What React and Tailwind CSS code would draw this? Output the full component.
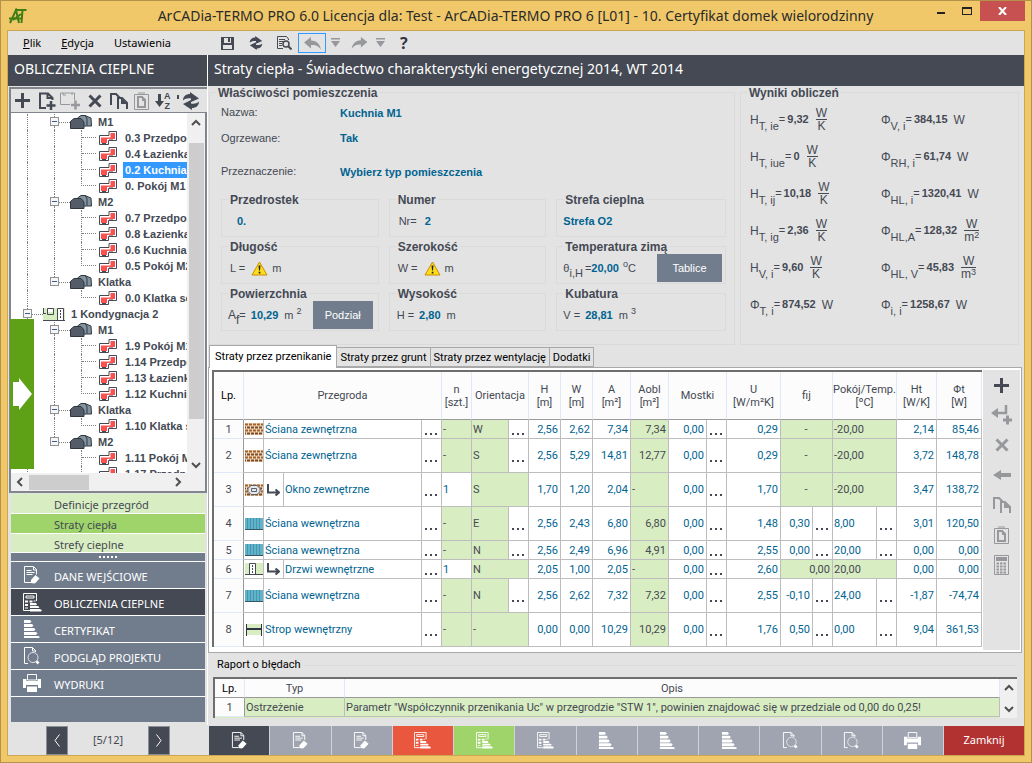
import { useState } from 'react';

const tree = [
  { level: 2, label: 'M1' },
  { level: 3, label: '0.3 Przedpokój M1', line: true },
  { level: 3, label: '0.4 Łazienka M1', line: true },
  { level: 3, label: '0.2 Kuchnia M1', line: true, selected: true },
  { level: 3, label: '0. Pokój M1', line: true, last: true },
  { level: 2, label: 'M2' },
  { level: 3, label: '0.7 Przedpokój M2', line: true },
  { level: 3, label: '0.8 Łazienka M2', line: true },
  { level: 3, label: '0.6 Kuchnia M2', line: true },
  { level: 3, label: '0.5 Pokój M2', line: true, last: true },
  { level: 2, label: 'Klatka', last: true },
  { level: 3, label: '0.0 Klatka schodowa', last: true },
  { level: 1, label: '1 Kondygnacja 2' },
  { level: 2, label: 'M1' },
  { level: 3, label: '1.9 Pokój M1', line: true },
  { level: 3, label: '1.14 Przedpokój M1', line: true },
  { level: 3, label: '1.13 Łazienka M1', line: true },
  { level: 3, label: '1.12 Kuchnia M1', line: true, last: true },
  { level: 2, label: 'Klatka' },
  { level: 3, label: '1.10 Klatka schodowa', line: true, last: true },
  { level: 2, label: 'M2', last: true },
  { level: 3, label: '1.11 Pokój M2' },
  { level: 3, label: '1.17 Przedpokój M2' },
];

const rows = [
  { icon: 'brick', name: 'Ściana zewnętrzna', n: '-', o: 'W', oDots: true, h: '2,56', w: '2,62', a: '7,34', aobl: '7,34', u: '0,29', fij: '-', temp: '-20,00', ht: '2,14', ft: '85,46' },
  { icon: 'brick', tall: true, name: 'Ściana zewnętrzna', n: '-', o: 'S', oDots: true, h: '2,56', w: '5,29', a: '14,81', aobl: '12,77', u: '0,29', fij: '-', temp: '-20,00', ht: '3,72', ft: '148,78' },
  { icon: 'window', tall: true, child: true, name: 'Okno zewnętrzne', n: '1', o: 'S', h: '1,70', w: '1,20', a: '2,04', aobl: '-', u: '1,70', fij: '-', temp: '-20,00', ht: '3,47', ft: '138,72' },
  { icon: 'wall', tall: true, name: 'Ściana wewnętrzna', n: '-', o: 'E', oDots: true, h: '2,56', w: '2,43', a: '6,80', aobl: '6,80', u: '1,48', fij: '0,30', fDots: true, temp: '8,00', ht: '3,01', ft: '120,50' },
  { icon: 'wall', name: 'Ściana wewnętrzna', n: '-', o: 'N', oDots: true, h: '2,56', w: '2,49', a: '6,96', aobl: '4,91', u: '2,55', fij: '0,00', fDots: true, temp: '20,00', ht: '0,00', ft: '0,00' },
  { icon: 'door', child: true, name: 'Drzwi wewnętrzne', n: '1', o: 'N', h: '2,05', w: '1,00', a: '2,05', aobl: '-', u: '2,60', fij: '0,00', temp: '20,00', ht: '0,00', ft: '0,00' },
  { icon: 'wall', tall: true, name: 'Ściana wewnętrzna', n: '-', o: 'N', oDots: true, h: '2,56', w: '2,62', a: '7,32', aobl: '7,32', u: '2,55', fij: '-0,10', fDots: true, temp: '24,00', ht: '-1,87', ft: '-74,74' },
  { icon: 'slab', tall: true, name: 'Strop wewnętrzny', n: '-', o: '-', h: '0,00', w: '0,00', a: '10,29', aobl: '10,29', u: '1,76', fij: '0,50', fDots: true, temp: '0,00', ht: '9,04', ft: '361,53' },
];

const resultsLeft = [
  { s: 'H', sub: 'T, ie', v: '9,32', top: 'W', bottom: 'K' },
  { s: 'H', sub: 'T, iue', v: '0', top: 'W', bottom: 'K' },
  { s: 'H', sub: 'T, ij', v: '10,18', top: 'W', bottom: 'K' },
  { s: 'H', sub: 'T, ig', v: '2,36', top: 'W', bottom: 'K' },
  { s: 'H', sub: 'V, i', v: '9,60', top: 'W', bottom: 'K' },
  { s: 'Φ', sub: 'T, i', v: '874,52' },
];

const resultsRight = [
  { s: 'Φ', sub: 'V, i', v: '384,15' },
  { s: 'Φ', sub: 'RH, i', v: '61,74' },
  { s: 'Φ', sub: 'HL, i', v: '1320,41' },
  { s: 'Φ', sub: 'HL,A', v: '128,32', top: 'W', bottom: 'm', pow: '2' },
  { s: 'Φ', sub: 'HL, V', v: '45,83', top: 'W', bottom: 'm', pow: '3' },
  { s: 'Φ', sub: 'i, i', v: '1258,67' },
];

const nav = [
  { label: 'DANE WEJŚCIOWE', Icon: DocEditIcon },
  { label: 'OBLICZENIA CIEPLNE', Icon: CalcBarsIcon, active: true },
  { label: 'CERTYFIKAT', Icon: BarsIcon },
  { label: 'PODGLĄD PROJEKTU', Icon: DocSearchIcon },
  { label: 'WYDRUKI', Icon: PrinterIcon },
];

const steps = [
  { Icon: DocEditIcon, bg: 'bg-[#444953]' },
  { Icon: DocEditIcon },
  { Icon: DocEditIcon },
  { Icon: CalcBarsIcon, bg: 'bg-[#e9573e]' },
  { Icon: CalcBarsIcon, bg: 'bg-[#9fd46a]' },
  { Icon: CalcBarsIcon },
  { Icon: BarsIcon },
  { Icon: BarsIcon },
  { Icon: BarsIcon },
  { Icon: DocSearchIcon },
  { Icon: DocSearchIcon },
  { Icon: PrinterIcon },
];

const tabs = ['Straty przez przenikanie', 'Straty przez grunt', 'Straty przez wentylację', 'Dodatki'];

/* ---------- icons ---------- */

function DocEditIcon({ size = 18 }) {
  return (
    <svg width={size} height={size} viewBox="0 0 18 18" fill="none" stroke="white">
      <path d="M8 16.5H1.5V.5h9l3 3v5" />
      <path d="M10.5 1v3h3M3.5 4.500h5M3.500 6.500h8M3.500 8.500h6" />
      <path d="M8 17v-3l4.500-5 4 3.500-4 4.500-1.500.5z" fill="white" stroke="none" />
    </svg>
  );
}

function CalcBarsIcon({ size = 19 }) {
  return (
    <svg width={size} height={size} viewBox="0 0 19 19" fill="none" stroke="white">
      <path d="M7 17.500H.5V.5h13V8" />
      <path d="M3 3h8v2H3z" />
      <path d="M2 7.500h3v2H2zM6.500 7.500h3v2h-3zM10.500 7.500h2v1h-2zM2 11h3v2H2zM2 14.500h3v1H2z" fill="white" stroke="none" />
      <path d="M7 10h6l1 1.500-1 .8H7zM7 13h8l1.500 1.200-1 .8H7zM7 16h10l2 1.300-1 1.200H7z" fill="white" stroke="none" />
    </svg>
  );
}

function BarsIcon({ size = 18 }) {
  return (
    <svg width={size} height={size} viewBox="0 0 18 18" fill="white">
      <path d="M1 0h6l1.500 1.500L7 3H1zM1 4h8l1.500 1.500L9 7H1zM1 8h10l1.500 1.500L11 11H1zM1 12h12l1.500 1.200L13 15H1zM1 16h14l2 1-1.500 1.500H1z" />
    </svg>
  );
}

function DocSearchIcon({ size = 18 }) {
  return (
    <svg width={size} height={size} viewBox="0 0 18 18" fill="none" stroke="white">
      <path d="M5 16.500H1.500V.5h8l3 3V5M9.500.5v3.500h3.500" />
      <circle cx="10" cy="10.500" r="5" stroke="#dfe3ea" />
      <path d="M12.500 15l2 2.500 2-2-2-2z" fill="white" stroke="none" />
    </svg>
  );
}

function PrinterIcon({ size = 18 }) {
  return (
    <svg width={size} height={size} viewBox="0 0 18 18" fill="white">
      <path d="M4.500.5h9V6h-9z" fill="none" stroke="white" />
      <path d="M0 5h3.500v2h11V5H18v9h-3v-3H3v3H0z" />
      <path d="M4 12.500h10V18H4z" />
    </svg>
  );
}

function PlusIcon() {
  return <svg width="15" height="15" viewBox="0 0 15 15"><path d="M6 0h3v6h6v3H9v6H6V9H0V6h6z" fill="#444953" /></svg>;
}

function CrossIcon({ color = '#444953', size = 14 }) {
  return (
    <svg width={size} height={size} viewBox="0 0 14 14">
      <path d="M1.500 1.500l11 11M12.500 1.500l-11 11" stroke={color} strokeWidth="3" />
    </svg>
  );
}

function AddPageIcon() {
  return (
    <svg width="18" height="18" viewBox="0 0 18 18" fill="none" stroke="#444953">
      <path d="M8 16H2V1.500h8l4.500 4.500v2M9.500 1.500V6h4" strokeWidth="2" />
      <path d="M13 9v9M8.500 13.500h9" strokeWidth="2.500" />
    </svg>
  );
}

function AddRoomIcon() {
  return (
    <svg width="20" height="18" viewBox="0 0 20 18" fill="none" stroke="#96989c">
      <path d="M10 12.500H.5V1h14v7M3 1v2h3M12 1v2" />
      <path d="M15.500 8.500v9M11 13h9" strokeWidth="2.500" />
    </svg>
  );
}

function CopyIcon({ color = '#444953' }) {
  return (
    <svg width="18" height="16" viewBox="0 0 18 16" fill="none" stroke={color} strokeWidth="2">
      <path d="M1 12V1h5l4 4" />
      <path d="M8 16V5h4l5 5v6" />
      <path d="M11 5v6h6z" fill={color} stroke="none" />
    </svg>
  );
}

function PasteIcon() {
  return (
    <svg width="15" height="18" viewBox="0 0 15 18" fill="none" stroke="#96989c">
      <path d="M.5 2.500h14v15H.5zM4 1h7" />
      <path d="M4 5h4l3 3v7H4z" strokeWidth="2" />
      <path d="M8 4v5h4z" fill="#96989c" stroke="none" />
    </svg>
  );
}

function SortIcon() {
  return (
    <span className="flex items-center text-[9px] font-bold leading-[10px] text-[#444953]">
      <svg width="9" height="14" viewBox="0 0 9 14"><path d="M3 0h3v7h3l-4.500 6L0 7h3z" fill="#444953" /></svg>
      <span className="flex flex-col"><span>A</span><span>Z</span></span>
    </span>
  );
}

function RefreshIcon({ size = 18 }) {
  return (
    <svg width={size} height={size} viewBox="0 0 18 18" fill="#444953">
      <path d="M1 8.500C1 4 4.500 2 8 2V0l9 6.500L9 10V6.500C6 6 3 6.500 1 8.500z" />
      <path d="M17 9.500c0 4.500-3.500 6.500-7 6.500v2l-9-6L9 8v3.500c3 .5 6 0 8-2z" />
    </svg>
  );
}

function BuildingIcon() {
  return (
    <svg width="22" height="14" viewBox="0 0 22 14" stroke="#2f3640" strokeWidth="1">
      <path d="M7.500 3L11 .5h4l6 2.500 .5 8H13z" fill="#84949f" />
      <path d="M.5 6.500L4 3.500h7L14 7v6.500H.5z" fill="#535c68" />
      <path d="M15 .5l2 3v7" fill="none" />
    </svg>
  );
}

function RoomIcon() {
  return (
    <svg width="18" height="14" viewBox="0 0 18 14">
      <path d="M.5 4.500h9.500v-4h7.500v9H9.500v4h-9z" fill="white" stroke="#444953" />
      <path d="M2 6.500h9.500V2H16v6H8v4H2z" fill="#fb5050" />
      <path d="M3 12h4v1.500H3zM10 8.500h4v1h-4z" fill="#444953" />
    </svg>
  );
}

function FloorIcon() {
  return (
    <svg width="22" height="13" viewBox="0 0 22 13">
      <path d="M0 0h22v13H0z" fill="#d9edc2" />
      <path d="M15 1h6v11h-6z" fill="white" />
      <path d="M.5 0v6M0 5.500h3M0 12.500h22M4.500.5h6v6h-6zM14.500 12V.5h6V12" fill="none" stroke="#444953" />
      <path d="M5 1h5v3H5z" fill="white" />
      <path d="M17.500 2v9" stroke="#444953" strokeDasharray="2 1" />
    </svg>
  );
}

function WarningIcon() {
  return (
    <svg width="17" height="15" viewBox="0 0 17 15">
      <path d="M8.500 1L16 14H1z" fill="#ffdc1e" stroke="#c98f00" strokeLinejoin="round" />
      <path d="M7.500 4.500h2l-.5 5H8zM7.700 10.700h1.700v1.700H7.700z" fill="#222" />
    </svg>
  );
}

function PartitionIcon({ type }) {
  if (type === 'wall') {
    return (
      <svg width="18" height="12" viewBox="0 0 18 12">
        <path d="M0 0h18v12H0z" fill="#5fb3cb" />
        <path d="M2.500 0v11M5.500 0v11M8.500 0v11M11.500 0v11M14.500 0v11" stroke="#4796ae" />
        <path d="M0 11.500h18" stroke="#3a5663" />
      </svg>
    );
  }
  if (type === 'door') {
    return (
      <svg width="18" height="12" viewBox="0 0 18 12">
        <path d="M0 0h18v12H0z" fill="#d9edc2" />
        <path d="M4 1h6v10H4z" fill="white" />
        <path d="M0 11.500h18M4.500 11V.5h6V11" fill="none" stroke="#444953" />
        <path d="M7.500 2v9" stroke="#444953" strokeDasharray="2 1" />
      </svg>
    );
  }
  if (type === 'slab') {
    return (
      <svg width="18" height="12" viewBox="0 0 18 12">
        <path d="M1 0h16v11H1z" fill="#d9edc2" />
        <path d="M1.500 0v12M16.500 0v12" stroke="#2f3640" />
        <path d="M2 5h14" stroke="#2f3640" strokeWidth="2" />
      </svg>
    );
  }
  return (
    <svg width="18" height="12" viewBox="0 0 18 12">
      <path d="M0 0h18v12H0z" fill="#eed9bf" />
      <path d="M0 1.500h18M0 7.500h18" stroke="#a5622c" strokeWidth="2" strokeDasharray="3 1" />
      <path d="M0 4.500h18M0 10.500h18" stroke="#7d4a22" strokeWidth="2" strokeDasharray="3 1" strokeDashoffset="2" />
      {type === 'window' && <path d="M6 1.500h6l3 3v3l-3 3H6l-3-3v-3zM6.500 4.500h5v3h-5z" fill="#e5e7eb" stroke="#5b626c" />}
    </svg>
  );
}

function Chevron({ dir }) {
  const d = { up: 'M1 7l4-4 4 4', down: 'M1 3l4 4 4-4', left: 'M7 1L3 5l4 4', right: 'M3 1l4 4-4 4' }[dir];
  return <svg width="10" height="10" viewBox="0 0 10 10" fill="none" stroke="#505050" strokeWidth="2"><path d={d} /></svg>;
}

/* ---------- small parts ---------- */

function Group({ title, className = '', legendClass = 'left-[6px]', children }) {
  return (
    <fieldset className={`relative min-w-0 border border-[#dadada] ${className}`}>
      <legend className={`absolute -top-[6px] whitespace-nowrap bg-[#e3e3e3] px-[2px] text-[12px] leading-[13px] font-bold text-[#444953] ${legendClass}`}>{title}</legend>
      {children}
    </fieldset>
  );
}

function Value({ children }) {
  return <span className="font-bold text-[#006491]">{children}</span>;
}

function Result({ item }) {
  return (
    <div className="flex h-[37px] items-center whitespace-nowrap text-[11px]">
      <span className="text-[12px]">{item.s}</span>
      <sub className="top-[6px] text-[11px]">{item.sub}</sub>
      <span>=</span>
      <b className="ml-[2px]">{item.v}</b>
      {item.top ? (
        <span className="ml-[7px] flex flex-col items-center text-[12px] leading-[12px]">
          <span className="w-full border-b border-[#444953] text-center">{item.top}</span>
          <span className="flex">{item.bottom}{item.pow && <span className="text-[9px] leading-[9px]">{item.pow}</span>}</span>
        </span>
      ) : (
        <span className="ml-[6px] text-[12px]">W</span>
      )}
    </div>
  );
}

function TreeRow({ item }) {
  const dots = 'border-[#808080] border-dotted';
  return (
    <li className="flex h-[16px] items-center whitespace-nowrap">
      {item.level > 1 && (
        <>
          <span className="w-[16px] shrink-0" />
          <span className={`h-full shrink-0 border-l ${dots} ${item.level === 2 ? 'w-[23px]' : 'w-[27px]'}`} />
        </>
      )}
      {item.level === 1 && <span className="w-[12px] shrink-0" />}
      {item.level === 3 ? (
        <>
          <span className={`h-full w-[27px] shrink-0 ${item.line ? `border-l ${dots}` : ''}`} />
          <span className={`flex h-full w-[15px] shrink-0 flex-col ${item.last ? '' : `border-l ${dots}`}`}>
            <span className={`h-[8px] border-b ${dots} ${item.last ? 'border-l' : ''}`} />
          </span>
          <span className="ml-[3px] shrink-0"><RoomIcon /></span>
          <span className={`ml-[6px] h-[16px] px-[2px] leading-[16px] ${item.selected ? 'bg-[#3399ff] text-white' : ''}`}>{item.label}</span>
        </>
      ) : (
        <>
          <span className="flex h-full shrink-0 flex-col items-center">
            <span className={`h-[3px] border-l ${dots}`} />
            <button aria-label="Zwiń" className="flex h-[9px] w-[9px] items-center justify-center border border-[#919191] bg-[#f6f6f6]">
              <span className="h-px w-[5px] bg-[#3c5a9c]" />
            </button>
            {!item.last && <span className={`flex-1 border-l ${dots}`} />}
          </span>
          <span className={`w-[11px] shrink-0 border-t ${dots}`} />
          <span className="shrink-0">{item.level === 1 ? <FloorIcon /> : <BuildingIcon />}</span>
          <span className="ml-[6px]">{item.label}</span>
        </>
      )}
    </li>
  );
}

function Cell({ green, left, center, span, children }) {
  return (
    <td
      colSpan={span}
      className={`overflow-hidden border-r border-b border-[#bdbdbd] py-0 pr-[2px] pl-px whitespace-nowrap ${green ? 'bg-[#d9edc2] text-[#444953]' : 'text-[#006491]'} ${left ? 'text-left' : center ? 'text-center' : 'text-right'}`}
    >
      {children}
    </td>
  );
}

function DotsCell() {
  return (
    <td className="border-r border-b border-[#bdbdbd] p-0 text-center">
      <button aria-label="Wybierz" className="inline-flex gap-[3px] pt-[9px] align-middle">
        <span className="h-[2px] w-[2px] bg-[#444953]" />
        <span className="h-[2px] w-[2px] bg-[#444953]" />
        <span className="h-[2px] w-[2px] bg-[#444953]" />
      </button>
    </td>
  );
}

function Head({ span, className = '', children }) {
  return <th colSpan={span} className={`border-r border-b border-r-[#dfe9f7] border-b-[#9a9a9a] p-0 font-normal ${className}`}>{children}</th>;
}

/* ---------- page areas ---------- */

function TitleBar() {
  return (
    <header className="flex h-[29px] shrink-0 items-start">
      <svg className="mt-[7px] ml-[8px]" width="18" height="16" viewBox="0 0 18 16" fill="none" stroke="#3f7d16" strokeWidth="2">
        <path d="M1 15L7 2l3 13M0 10.500h13" />
        <path d="M6 2h11.500M13.500 2l-1 13M12 6l-8 6" />
      </svg>
      <h1 className="ml-[76px] flex-1 pt-[4px] text-center font-['Noto_Sans',sans-serif] text-[14px] leading-[21px] whitespace-nowrap text-[#2b2b2b]">
        ArCADia-TERMO PRO 6.0 Licencja dla: Test - ArCADia-TERMO PRO 6 [L01] - 10. Certyfikat domek wielorodzinny
      </h1>
      <button aria-label="Minimalizuj" className="flex h-[20px] w-[26px] items-center justify-center pt-[4px]">
        <span className="h-[2px] w-[8px] bg-[#222]" />
      </button>
      <button aria-label="Maksymalizuj" className="flex h-[20px] w-[26px] items-center justify-center">
        <span className="h-[8px] w-[10px] border border-t-2 border-[#222]" />
      </button>
      <button aria-label="Zamknij okno" className="mr-[6px] flex h-[20px] w-[45px] items-center justify-center bg-[#c75050]">
        <svg width="9" height="8" viewBox="0 0 9 8"><path d="M1 0l7 8M8 0L1 8" stroke="white" strokeWidth="2" /></svg>
      </button>
    </header>
  );
}

function MenuBar() {
  return (
    <div className="flex h-[24px] shrink-0 items-center bg-[#e3e3e3] font-['Noto_Sans',sans-serif] text-[11px] text-black">
      <nav className="flex w-[213px] gap-[20px] pl-[15px]">
        <button><u>P</u>lik</button>
        <button><u>E</u>dycja</button>
        <button>Ustawienia</button>
      </nav>
      <button aria-label="Zapisz" className="w-[28px]">
        <svg width="13" height="13" viewBox="0 0 13 13"><path d="M0 0h13v13H0zM3 1v5h7V1zM2 8v4h9V8z" fill="#444953" fillRule="evenodd" /><path d="M7 1h2v4H7z" fill="#444953" /></svg>
      </button>
      <button aria-label="Odśwież" className="w-[28px]"><RefreshIcon size={14} /></button>
      <button aria-label="Podgląd" className="w-[21px]">
        <svg width="15" height="14" viewBox="0 0 15 14" fill="none" stroke="#444953">
          <path d="M11.500 4V3l-2-2.500h-9v12H6M2 3.500h6M2 5.500h5M2 7.500h3M2 9.500h3" />
          <circle cx="9" cy="8" r="3" strokeWidth="1.500" />
          <path d="M11 10l3.500 3.500" strokeWidth="2" />
        </svg>
      </button>
      <button aria-label="Cofnij" className="flex h-[20px] w-[28px] items-center justify-center border border-[#3399ff]">
        <svg width="17" height="13" viewBox="0 0 17 13"><path d="M0 5.500L7 0v3.500c6 0 9 4 10 9C14 8.500 11 8 7 8v3.500z" fill="#96989c" /></svg>
      </button>
      <button aria-label="Lista cofania" className="w-[20px] pl-[5px]">
        <svg width="9" height="10" viewBox="0 0 9 10"><path d="M0 0h9v1.500H0zM0 3h9L4.500 9z" fill="#96989c" /></svg>
      </button>
      <button aria-label="Ponów" className="w-[30px] pl-[5px]">
        <svg width="17" height="12" viewBox="0 0 17 13"><path d="M17 5.500L10 0v3.500c-6 0-9 4-10 9C3 8.500 6 8 10 8v3.500z" fill="#96989c" /></svg>
      </button>
      <button aria-label="Lista ponawiania" className="w-[20px]">
        <svg width="9" height="10" viewBox="0 0 9 10"><path d="M0 0h9v1.500H0zM0 3h9L4.500 9z" fill="#96989c" /></svg>
      </button>
      <button className="ml-[4px] text-[16px] leading-[20px] font-bold text-[#33373f]">?</button>
    </div>
  );
}

function Sidebar() {
  return (
    <aside className="flex w-[199px] shrink-0 flex-col bg-[#e3e3e3]">
      <h2 className="h-[31px] shrink-0 bg-[#444953] pl-[6px] font-['Noto_Sans',sans-serif] text-[14px] leading-[28px] text-white">OBLICZENIA CIEPLNE</h2>
      <div className="mt-[1px] ml-[1px] flex min-h-0 flex-1 flex-col border-2 border-r-0 border-[#81858c]">
        <div className="flex h-[24px] shrink-0 items-center gap-[8px] overflow-hidden border-b border-[#81858c] pl-[4px] font-['Liberation_Sans',sans-serif]">
          <button aria-label="Dodaj"><PlusIcon /></button>
          <button aria-label="Dodaj stronę"><AddPageIcon /></button>
          <button aria-label="Dodaj pomieszczenie" className="-ml-[4px]"><AddRoomIcon /></button>
          <button aria-label="Usuń"><CrossIcon /></button>
          <button aria-label="Kopiuj"><CopyIcon /></button>
          <button aria-label="Wklej" className="-ml-[2px]"><PasteIcon /></button>
          <button aria-label="Sortuj" className="-ml-[2px]"><SortIcon /></button>
          <button aria-label="Odśwież drzewo" className="-ml-[2px] flex shrink-0 gap-[3px]">
            <span className="mt-[3px] h-[4px] w-[2px] bg-[#444953]" />
            <RefreshIcon />
          </button>
        </div>
        <div className="relative flex min-h-0 flex-1 border-r-2 border-[#81858c] bg-white">
          <ul className="min-w-0 flex-1 overflow-hidden pt-px font-['Liberation_Sans',sans-serif] text-[11px] font-bold text-[#444953]">
            {tree.map((item, i) => <TreeRow key={i} item={item} />)}
          </ul>
          <div className="flex w-[18px] shrink-0 flex-col items-center bg-[#f0f0f0]">
            <button aria-label="W górę" className="flex h-[30px] items-center pb-[10px]"><Chevron dir="up" /></button>
            <div className="w-[15px] basis-[276px] bg-[#cdcdcd]" />
            <button aria-label="W dół" className="mt-auto flex h-[17px] items-center"><Chevron dir="down" /></button>
          </div>
          <button aria-label="Wysuń panel" className="absolute bottom-[4px] -left-px flex h-[150px] w-[24px] items-center justify-center bg-[#5ea016]">
            <svg width="19" height="32" viewBox="0 0 19 32"><path d="M0 4h6V0l13 16L6 32v-4H0z" fill="white" /></svg>
          </button>
        </div>
        <div className="flex h-[18px] shrink-0 items-center border-r-2 border-[#81858c] bg-[#f0f0f0] px-[4px]">
          <button aria-label="W lewo"><Chevron dir="left" /></button>
          <div className="mr-auto ml-[4px] h-[15px] w-[60px] bg-[#cdcdcd]" />
          <button aria-label="W prawo" className="mr-[18px]"><Chevron dir="right" /></button>
        </div>
      </div>
      <div className="mt-px mr-[2px] mb-[3px] ml-[3px] flex shrink-0 flex-col gap-px bg-white font-['Noto_Sans',sans-serif] text-[11px]">
        <a href="#definicje" className="h-[19px] bg-[#d9edc2] pl-[43px] leading-[21px] text-[#444953]">Definicje przegród</a>
        <a href="#straty" className="h-[19px] bg-[#9fd46a] pl-[43px] leading-[21px] text-[#444953]">Straty ciepła</a>
        <a href="#strefy" className="h-[18px] bg-[#d9edc2] pl-[43px] leading-[21px] text-[#444953]">Strefy cieplne</a>
        <div className="flex h-[8px] items-center justify-center gap-[2px] bg-[#717d8d]">
          {[0, 1, 2, 3, 4].map((i) => <span key={i} className="h-[2px] w-[2px] bg-white" />)}
        </div>
        {nav.map(({ label, Icon, active }) => (
          <a key={label} href="#nav" className={`flex h-[26px] items-center pl-[12px] text-white ${active ? 'bg-[#444953]' : 'bg-[#717d8d]'}`}>
            <span className="w-[31px]"><Icon /></span>
            <span className="pt-[4px]">{label}</span>
          </a>
        ))}
        <div className="h-[25px] bg-[#717d8d]" />
      </div>
    </aside>
  );
}

function RoomProperties() {
  const field = 'flex h-[38px] items-center whitespace-nowrap pt-[6px] pl-[6px]';
  return (
    <div className="flex shrink-0 gap-[5px] pt-[6px] pr-[5px] pl-px font-['Liberation_Sans',sans-serif] text-[11px] text-[#444953]">
      <Group title="Właściwości pomieszczenia" className="flex-1 pr-[8px] pb-[13px] pl-[11px]">
        <dl className="grid grid-cols-[119px_1fr] pt-[8px]">
          <dt className="h-[25px] leading-[22px]">Nazwa:</dt>
          <dd className="leading-[24px]"><Value>Kuchnia M1</Value></dd>
          <dt className="h-[29px] leading-[25px]">Ogrzewane:</dt>
          <dd className="leading-[25px]"><Value>Tak</Value></dd>
          <dt className="h-[44px] leading-[33px]">Przeznaczenie:</dt>
          <dd className="leading-[35px]"><Value>Wybierz typ pomieszczenia</Value></dd>
        </dl>
        <div className="grid grid-cols-[158fr_158fr_170fr] gap-x-[10px] gap-y-[9px]">
          <Group title="Przedrostek" className={field}>
            <span className="ml-[9px]"><Value>0.</Value></span>
          </Group>
          <Group title="Numer" className={field}>
            <span className="mr-[8px] ml-[3px]">Nr=</span><Value>2</Value>
          </Group>
          <Group title="Strefa cieplna" className={field}><Value>Strefa O2</Value></Group>
          <Group title="Długość" className={field}>
            <span className="mr-[6px] ml-[2px]">L =</span><WarningIcon /><span className="ml-[4px]">m</span>
          </Group>
          <Group title="Szerokość" className={field}>
            <span className="mr-[6px] ml-[2px]">W =</span><WarningIcon /><span className="ml-[4px]">m</span>
          </Group>
          <Group title="Temperatura zimą" className={field}>
            <span>θ</span><sub className="top-[5px] text-[11px]">i,H</sub><span className="ml-[2px]">=</span><Value>20,00</Value>
            <span className="ml-[4px]"><sup className="text-[9px]">o</sup>C</span>
            <button className="relative mr-[3px] ml-auto h-[28px] w-[65px] shrink-0 bg-[#717d8d] text-white">Tablice</button>
          </Group>
          <Group title="Powierzchnia" className={field}>
            <span className="text-[12px]">A</span><sub className="top-[5px] text-[12px]">f</sub><span className="mr-[5px]">=</span><Value>10,29</Value>
            <span className="ml-[6px]">m <sup className="text-[9px]">2</sup></span>
            <button className="mr-[5px] ml-auto h-[28px] w-[60px] shrink-0 bg-[#717d8d] text-white">Podział</button>
          </Group>
          <Group title="Wysokość" className={field}>
            <span className="mr-[5px] ml-px">H =</span><Value>2,80</Value><span className="ml-[6px]">m</span>
          </Group>
          <Group title="Kubatura" className={field}>
            <span className="mr-[5px]">V =</span><Value>28,81</Value>
            <span className="ml-[6px]">m <sup className="text-[9px]">3</sup></span>
          </Group>
        </div>
      </Group>
      <Group title="Wyniki obliczeń" className="w-[279px] shrink-0">
        <div className="grid grid-cols-[131px_1fr] pt-[8px] pl-[9px]">
          <div>{resultsLeft.map((r) => <Result key={r.sub} item={r} />)}</div>
          <div>{resultsRight.map((r) => <Result key={r.sub} item={r} />)}</div>
        </div>
      </Group>
    </div>
  );
}

function LossTable() {
  return (
    <table className="w-full table-fixed border-separate border-spacing-0 border-t-2 border-l-2 border-[#6e6e6e] text-[11px] leading-[13px] text-[#444953]">
      <colgroup>
        <col className="w-[30px]" />
        <col className="w-[20px]" />
        <col className="w-[20px]" />
        <col />
        <col className="w-[20px]" />
        <col className="w-[30px]" />
        <col className="w-[37px]" />
        <col className="w-[20px]" />
        <col className="w-[32px]" />
        <col className="w-[32px]" />
        <col className="w-[38px]" />
        <col className="w-[38px]" />
        <col className="w-[38px]" />
        <col className="w-[20px]" />
        <col className="w-[54px]" />
        <col className="w-[32px]" />
        <col className="w-[20px]" />
        <col className="w-[44px]" />
        <col className="w-[20px]" />
        <col className="w-[40px]" />
        <col className="w-[45px]" />
      </colgroup>
      <thead>
        <tr className="h-[48px] bg-[#fcfcfc]">
          <Head className="border-r-[#9a9a9a] text-black">Lp.</Head>
          <Head span={4}>Przegroda</Head>
          <Head>n<br />[szt.]</Head>
          <Head span={2}>Orientacja</Head>
          <Head>H<br />[m]</Head>
          <Head>W<br />[m]</Head>
          <Head>A<br />[m²]</Head>
          <Head>Aobl<br />[m²]</Head>
          <Head span={2}>Mostki</Head>
          <Head>U<br />[W/m²K]</Head>
          <Head span={2}>fij</Head>
          <Head span={2}>Pokój/Temp.<br />[ºC]</Head>
          <Head>Ht<br />[W/K]</Head>
          <Head>Φt<br />[W]</Head>
        </tr>
      </thead>
      <tbody>
        {rows.map((r, i) => (
          <tr key={i} className={r.tall ? 'h-[34px]' : 'h-[19px]'}>
            <th className="border-r border-b border-r-[#9a9a9a] border-b-[#dfe9f7] bg-[#fcfcfc] p-0 font-normal">{i + 1}</th>
            <td className="border-r border-b border-[#bdbdbd] p-0 pl-px"><PartitionIcon type={r.icon} /></td>
            {r.child && (
              <td className="border-r border-b border-[#bdbdbd] p-0 pl-[3px]">
                <svg width="13" height="12" viewBox="0 0 13 12"><path d="M1 0v8.500h10M8.500 5.500l3.500 3-3.500 3" fill="none" stroke="#444953" strokeWidth="2" /></svg>
              </td>
            )}
            <Cell left span={r.child ? 1 : 2}>{r.name}</Cell>
            <DotsCell />
            <Cell left green={r.n === '-'}>{r.n}</Cell>
            <Cell left green span={r.oDots ? 1 : 2}>{r.o}</Cell>
            {r.oDots && <DotsCell />}
            <Cell>{r.h}</Cell>
            <Cell>{r.w}</Cell>
            <Cell>{r.a}</Cell>
            <Cell green left={r.aobl === '-'}>{r.aobl}</Cell>
            <Cell>0,00</Cell>
            <DotsCell />
            <Cell>{r.u}</Cell>
            <Cell green={!r.fDots} center={r.fij === '-'} span={r.fDots ? 1 : 2}>{r.fij}</Cell>
            {r.fDots && <DotsCell />}
            <Cell left green={!r.fDots} span={r.fDots ? 1 : 2}>{r.temp}</Cell>
            {r.fDots && <DotsCell />}
            <Cell>{r.ht}</Cell>
            <Cell>{r.ft}</Cell>
          </tr>
        ))}
      </tbody>
    </table>
  );
}

function Losses() {
  const [tab, setTab] = useState(0);
  return (
    <section className="flex min-h-0 flex-1 flex-col font-['Roboto',sans-serif]">
      <div role="tablist" className="flex h-[22px] shrink-0 items-end pl-px text-[11px] text-black">
        {tabs.map((t, i) => (
          <button
            key={t}
            role="tab"
            aria-selected={tab === i}
            onClick={() => setTab(i)}
            className={`border border-[#a9a9a9] whitespace-nowrap ${tab === i ? 'relative -mb-px h-[23px] border-b-0 bg-white px-[5px]' : 'h-[20px] border-l-0 bg-[#e3e3e3] px-[3px] pt-[2px]'}`}
          >
            {t}
          </button>
        ))}
      </div>
      <div className="mr-[2px] flex flex-1 gap-px border border-[#a9a9a9] bg-white pt-[2px] pr-px pb-[2px] pl-[3px]">
        <div className="min-w-0 flex-1"><LossTable /></div>
        <div className="flex w-[37px] shrink-0 flex-col items-center bg-[#e3e3e3] *:flex *:h-[30px] *:items-center *:justify-center">
          <button aria-label="Dodaj przegrodę"><PlusIcon /></button>
          <button aria-label="Dodaj podrzędną">
            <svg width="21" height="20" viewBox="0 0 21 20" fill="none" stroke="#96989c">
              <path d="M15 0v8H6" strokeWidth="2.500" /><path d="M0 8l7-5v10z" fill="#96989c" stroke="none" />
              <path d="M16.500 10.500v9M12 15h9" strokeWidth="3" />
            </svg>
          </button>
          <button aria-label="Usuń przegrodę"><CrossIcon color="#96989c" /></button>
          <button aria-label="Wstecz">
            <svg width="18" height="10" viewBox="0 0 18 10"><path d="M0 5l8-5v3h10v4H8v3z" fill="#96989c" /></svg>
          </button>
          <button aria-label="Kopiuj przegrodę"><CopyIcon color="#96989c" /></button>
          <button aria-label="Wklej przegrodę"><PasteIcon /></button>
          <button aria-label="Kalkulator">
            <svg width="15" height="20" viewBox="0 0 15 20">
              <path d="M.5.5h14v19H.5z" fill="none" stroke="#96989c" />
              <path d="M2 2h11v4H2z" fill="#96989c" />
              <path d="M2.500 8.500h10M2.500 11.500h10M2.500 14.500h10M2.500 17.500h10" stroke="#96989c" strokeWidth="2" strokeDasharray="2.500 1" />
            </svg>
          </button>
        </div>
      </div>
    </section>
  );
}

function ErrorReport() {
  return (
    <section className="h-[72px] shrink-0 pr-[7px] pl-[5px] font-['Roboto',sans-serif]">
      <div className="flex h-[24px] items-center gap-[4px] pl-[4px]">
        <h3 className="text-[11px] text-black">Raport o błędach</h3>
        <span className="h-px flex-1 bg-[#dadada]" />
      </div>
      <div className="flex h-[41px] overflow-hidden border-t-2 border-l-2 border-[#6e6e6e] bg-[#f0f0f0]">
        <div className="min-w-0 flex-1 bg-[#d9edc2]">
          <table className="w-full table-fixed border-separate border-spacing-0 text-[11px] leading-[13px] text-[#444953]">
            <colgroup>
              <col className="w-[30px]" />
              <col className="w-[100px]" />
              <col />
            </colgroup>
            <thead>
              <tr className="h-[19px] bg-[#fcfcfc]">
                <Head className="border-r-[#9a9a9a] text-black">Lp.</Head>
                <Head>Typ</Head>
                <Head>Opis</Head>
              </tr>
            </thead>
            <tbody>
              <tr className="h-[19px]">
                <th className="border-r border-b border-r-[#9a9a9a] border-b-[#dfe9f7] bg-[#fcfcfc] p-0 font-normal">1</th>
                <Cell left green>Ostrzeżenie</Cell>
                <Cell left green>Parametr "Współczynnik przenikania Uc" w przegrodzie "STW 1", powinien znajdować się w przedziale od 0,00 do 0,25!</Cell>
              </tr>
            </tbody>
          </table>
        </div>
        <div className="flex w-[17px] shrink-0 flex-col items-center justify-between py-[4px]">
          <button aria-label="Raport w górę" className="flex"><Chevron dir="up" /></button>
          <button aria-label="Raport w dół" className="flex"><Chevron dir="down" /></button>
        </div>
      </div>
    </section>
  );
}

function Footer() {
  const arrow = 'flex h-full w-[22px] items-center justify-center border border-[#8b8f96] bg-[#444953]';
  return (
    <footer className="flex h-[30px] shrink-0 bg-[#e3e3e3] pt-px font-['Noto_Sans',sans-serif] text-[11px]">
      <div className="flex w-[201px] shrink-0 items-center pl-[38px] text-[#444953]">
        <button aria-label="Poprzedni" className={arrow}>
          <svg width="6" height="13" viewBox="0 0 6 13"><path d="M5.500.5l-4.500 6 4.500 6" fill="none" stroke="white" /></svg>
        </button>
        <span className="w-[80px] text-center">[5/12]</span>
        <button aria-label="Następny" className={arrow}>
          <svg width="6" height="13" viewBox="0 0 6 13"><path d="M.5.5l4.500 6-4.500 6" fill="none" stroke="white" /></svg>
        </button>
      </div>
      {steps.map(({ Icon, bg = 'bg-[#a0a4b0]' }, i) => (
        <button key={i} aria-label={`Krok ${i + 1}`} className={`flex min-w-0 flex-1 items-center justify-center border-r border-[#d0d2d8] ${bg}`}>
          <Icon size={17} />
        </button>
      ))}
      <button className="w-[80px] shrink-0 bg-[#b23232] text-white">Zamknij</button>
    </footer>
  );
}

export default function App() {
  return (
    <div className="flex h-screen flex-col overflow-hidden border border-[#b3924a] bg-[#f0c869]">
      <TitleBar />
      <div className="mx-[6px] mb-[6px] flex min-h-0 flex-1 flex-col border border-[#cda652]">
        <MenuBar />
        <div className="flex min-h-0 flex-1">
          <Sidebar />
          <main className="flex min-w-0 flex-1 flex-col border-l border-white bg-[#e3e3e3]">
            <h2 className="h-[31px] shrink-0 bg-[#444953] pl-[6px] font-['Noto_Sans',sans-serif] text-[14px] leading-[28px] whitespace-nowrap text-white">
              Straty ciepła - Świadectwo charakterystyki energetycznej 2014, WT 2014
            </h2>
            <RoomProperties />
            <Losses />
            <ErrorReport />
          </main>
        </div>
        <Footer />
      </div>
    </div>
  );
}
